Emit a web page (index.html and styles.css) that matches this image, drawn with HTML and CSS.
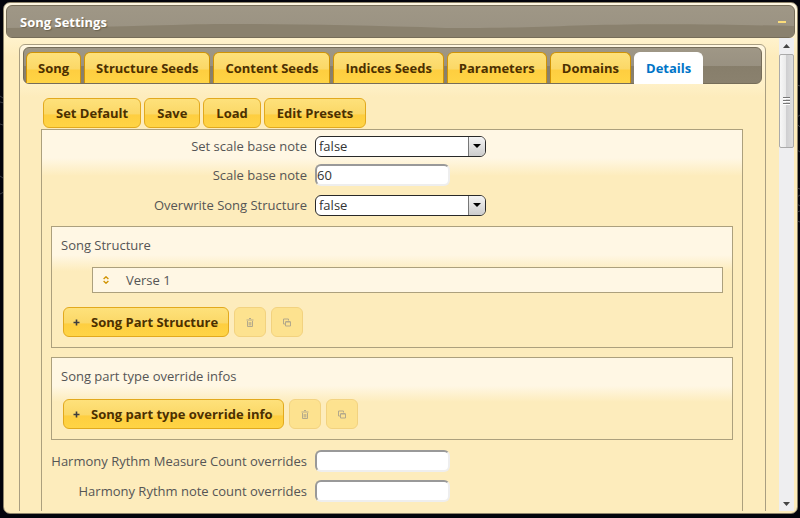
FILE: index.html
```html
<!DOCTYPE html>
<html lang="en">
<head>
<meta charset="utf-8">
<title>Song Settings</title>
<link rel="stylesheet" href="styles.css">
</head>
<body>
<svg class="backdrop" viewBox="0 0 800 518" preserveAspectRatio="none" aria-hidden="true">
  <path d="M0 96l3 2M0 102l4 1M0 124l3 1M0 176l3 2M0 194l4-2M797 85l3 1M797 117l3-2M797 124l3 3M797 150l3 2M797 188l3 1M797 197l3-2M797 204l3 2M797 212l3-1M797 221l3 1"/>
</svg>
<svg class="symbols" aria-hidden="true">
  <symbol id="i-plus" viewBox="0 0 7 7"><path d="M3.5 0.5v6M.5 3.5h6" stroke="#3d3d3d" stroke-width="1.6"/></symbol>
  <symbol id="i-trash" viewBox="0 0 8 9"><path d="M3 .5h2M.5 2h7M1.5 3v5.500h5V3M3.200 4v3.500M4.800 4v3.500" fill="none" stroke="#3d3d3d"/></symbol>
  <symbol id="i-copy" viewBox="0 0 8 8"><path d="M2 5.500H.5v-5h5V2M2.500 3.500h5v4h-5zM2.500 3h5" fill="none" stroke="#3d3d3d"/></symbol>
  <symbol id="i-sort" viewBox="0 0 6 8"><path d="M.6 3L3 .8 5.400 3M.6 5L3 7.200 5.400 5" fill="none" stroke="#d19405" stroke-width="1.4"/></symbol>
</svg>
<main class="dialog">
  <header class="titlebar">
    <svg class="wave" viewBox="0 0 790 34" preserveAspectRatio="none" aria-hidden="true"><path d="M0 24C60 24 130 22 190 20C260 19 350 21 440 24C530 25 560 20 660 20C710 20 750 21 790 22V34H0z"/></svg>
    <h1>Song Settings</h1>
    <button class="minimize" type="button" aria-label="Minimize"></button>
  </header>
  <div class="viewport">
    <section class="tabs">
      <nav class="tablist">
        <a class="tab" href="#song">Song</a>
        <a class="tab" href="#structure">Structure Seeds</a>
        <a class="tab" href="#content">Content Seeds</a>
        <a class="tab" href="#indices">Indices Seeds</a>
        <a class="tab" href="#parameters">Parameters</a>
        <a class="tab" href="#domains">Domains</a>
        <a class="tab active" href="#details">Details</a>
      </nav>
      <div class="details" id="details">
        <div class="toolbar">
          <button class="btn" type="button">Set Default</button>
          <button class="btn" type="button">Save</button>
          <button class="btn" type="button">Load</button>
          <button class="btn" type="button">Edit Presets</button>
        </div>
        <form class="panel">
          <div class="field">
            <label for="setbase">Set scale base note</label>
            <span class="combo"><select id="setbase"><option>false</option><option>true</option></select></span>
          </div>
          <div class="field">
            <label for="base">Scale base note</label>
            <input id="base" type="text" value="60">
          </div>
          <div class="field">
            <label for="overwrite">Overwrite Song Structure</label>
            <span class="combo"><select id="overwrite"><option>false</option><option>true</option></select></span>
          </div>
          <section class="group">
            <h2>Song Structure</h2>
            <ul class="items">
              <li><svg class="sort"><use href="#i-sort"/></svg>Verse 1</li>
            </ul>
            <div class="actions">
              <button class="btn add" type="button"><svg class="plus"><use href="#i-plus"/></svg>Song Part Structure</button>
              <button class="btn square" type="button" disabled aria-label="Delete"><svg><use href="#i-trash"/></svg></button>
              <button class="btn square" type="button" disabled aria-label="Copy"><svg><use href="#i-copy"/></svg></button>
            </div>
          </section>
          <section class="group short">
            <h2>Song part type override infos</h2>
            <div class="actions">
              <button class="btn add" type="button"><svg class="plus"><use href="#i-plus"/></svg>Song part type override info</button>
              <button class="btn square" type="button" disabled aria-label="Delete"><svg><use href="#i-trash"/></svg></button>
              <button class="btn square" type="button" disabled aria-label="Copy"><svg><use href="#i-copy"/></svg></button>
            </div>
          </section>
          <div class="field">
            <label for="measure">Harmony Rythm Measure Count overrides</label>
            <input id="measure" type="text">
          </div>
          <div class="field">
            <label for="notes">Harmony Rythm note count overrides</label>
            <input id="notes" type="text">
          </div>
        </form>
      </div>
    </section>
    <div class="scrollbar" aria-hidden="true">
      <svg class="arrow" viewBox="0 0 15 16"><path d="M4 10l3.500-4L11 10z"/></svg>
      <div class="thumb"><i></i><i></i><i></i></div>
      <svg class="arrow end" viewBox="0 0 15 16"><path d="M4 7h7l-3.500 4z"/></svg>
    </div>
  </div>
</main>
</body>
</html>
```
FILE: styles.css
```css
* { box-sizing: border-box; }

body {
  margin: 0;
  height: 100vh;
  padding: 2px 2px 4px 3px;
  background: #03040c;
  color: #555;
  font: 13px/20px "Open Sans", "Noto Sans", sans-serif;
  overflow: hidden;
}

.backdrop { position: absolute; inset: 0; width: 100%; height: 100%; z-index: -1; fill: none; stroke: #393b42; }
.symbols { position: absolute; width: 0; height: 0; }

.dialog {
  height: 100%;
  display: flex;
  flex-direction: column;
  padding: 2px;
  border: 1px solid #8e846b;
  border-radius: 7px;
  background: linear-gradient(#fff7e2 0, #fff2cc 36px, #fdecbc 54px);
}

.titlebar {
  position: relative;
  display: flex;
  flex: none;
  align-items: center;
  justify-content: space-between;
  height: 33px;
  padding: 0 8px 0 13px;
  border: 1px solid #766d59;
  border-radius: 6px;
  background: linear-gradient(#9f9786, #999181);
  color: #fff;
  overflow: hidden;
}
.wave { position: absolute; inset: 0; width: 100%; height: 100%; fill: #8a816e; }
h1 { position: relative; margin: 0; font-size: 13px; line-height: 20px; text-shadow: 1px 1px 1px #6b6350; }
.minimize { position: relative; width: 8px; height: 2px; padding: 0; border: 0; background: #fadc7a; }

.viewport { display: flex; flex: 1; min-height: 0; padding-right: 1px; overflow: hidden; }

.tabs {
  flex: 1;
  min-width: 0;
  height: max-content;
  min-height: 100%;
  margin: 6px 13px 0;
  padding: 2px 3px;
  border: 1px solid #a99e81;
  border-radius: 6px;
  background: linear-gradient(#fff7e2 0, #fff2cc 34px, #fdecbc 52px);
}

.tablist {
  display: flex;
  gap: 3px;
  height: 37px;
  padding: 4px 2px 0;
  border: 1px solid #766d59;
  border-radius: 6px;
  background: linear-gradient(#9f9786, #999181 50%, #877e6b 50%, #8a816e);
}
.tab {
  height: 31px;
  padding: 0 11px;
  border: 1px solid #d19405;
  border-bottom: 0;
  border-radius: 6px 6px 0 0;
  background: linear-gradient(#fee17b, #fbd867 53%, #fece40 57%, #ffd445);
  color: #4c3000;
  font-weight: bold;
  line-height: 31px;
  text-decoration: none;
  white-space: nowrap;
}
.tab.active { height: 32px; border-color: #fff; background: #fff; color: #0074c7; }

.details { padding: 14px 19px 0 18px; }
.toolbar { display: flex; gap: 3px; padding: 0 2px 1px; }

.btn {
  height: 30px;
  padding: 0 12px;
  border: 1px solid #e2a91d;
  border-radius: 6px;
  background: linear-gradient(#fee17b, #fbd867 53%, #fece40 57%, #ffd445);
  color: #4c3000;
  font: bold 13px/28px "Open Sans", "Noto Sans", sans-serif;
  white-space: nowrap;
}
.btn.add { display: flex; align-items: center; gap: 11px; padding: 0 10px 0 9px; }
.plus { width: 7px; height: 7px; }
.btn.square { display: flex; align-items: center; justify-content: center; width: 32px; padding: 0; background: #ffd449; opacity: .38; }
.btn.square svg { width: 8px; height: 9px; }

.panel {
  padding: 5px 9px 20px;
  border: 1px solid #aca07d;
  background: linear-gradient(#fff7e4 0, #fff7e4 28px, #fdecbc 46px);
}

.field { display: grid; grid-template-columns: 256px 1fr; column-gap: 8px; align-items: center; height: 22px; margin-bottom: 8px; }
.field label { text-align: right; white-space: nowrap; }
.field:first-child { margin-bottom: 7px; }

input, select { color: #333; font: 13px/20px "Open Sans", "Noto Sans", sans-serif; }
input { width: 135px; height: 22px; padding: 0; border: 2px solid; border-color: #999 #eee #eee #999; border-radius: 6px; background: #fff; }
.combo { position: relative; width: 171px; height: 21px; }
select { appearance: none; display: block; width: 100%; height: 21px; padding: 0 20px 0 3px; border: 1px solid #292929; border-radius: 6px; background: #fff; line-height: 19px; }
.combo::before { content: ""; position: absolute; top: 1px; right: 1px; width: 16px; height: 19px; border-left: 1px solid #777; border-radius: 0 5px 5px 0; background: linear-gradient(#f4f4f4, #ccc); pointer-events: none; }
.combo::after { content: ""; position: absolute; top: 8px; right: 5px; border: 4px solid transparent; border-top-color: #000; border-bottom: 0; pointer-events: none; }

.group {
  margin: 10px 0 9px;
  padding: 7px 9px 10px;
  border: 1px solid #aca07d;
  background: linear-gradient(#fff7e4 0, #fff7e4 28px, #fdecbc 44px);
}
.group.short { margin: 9px 0 10px; }
h2 { margin: 0; font-size: 13px; font-weight: normal; line-height: 22px; }
.items { margin: 11px 0 14px 31px; padding: 0; list-style: none; }
.items li { display: flex; align-items: center; height: 26px; padding-left: 10px; border: 1px solid #aca07d; background: #fff7e4; }
.sort { width: 6px; height: 8px; margin-right: 17px; }
.actions { display: flex; gap: 5px; padding-left: 2px; }
.short .actions { padding-top: 12px; }

.scrollbar { display: flex; flex-direction: column; flex: none; width: 15px; background: #eeeef0; }
.arrow { display: block; width: 15px; height: 16px; fill: #444; }
.arrow.end { margin-top: auto; }
.thumb { display: flex; flex-direction: column; align-items: center; justify-content: center; gap: 1px; height: 94px; border: 1px solid #aaa; border-radius: 2px; background: linear-gradient(90deg, #f7f7f7, #eaeaea 45%, #cfcfd1 50%, #dedede); }
.thumb i { width: 7px; height: 2px; border-top: 1px solid #777; background: #fff; }
```
